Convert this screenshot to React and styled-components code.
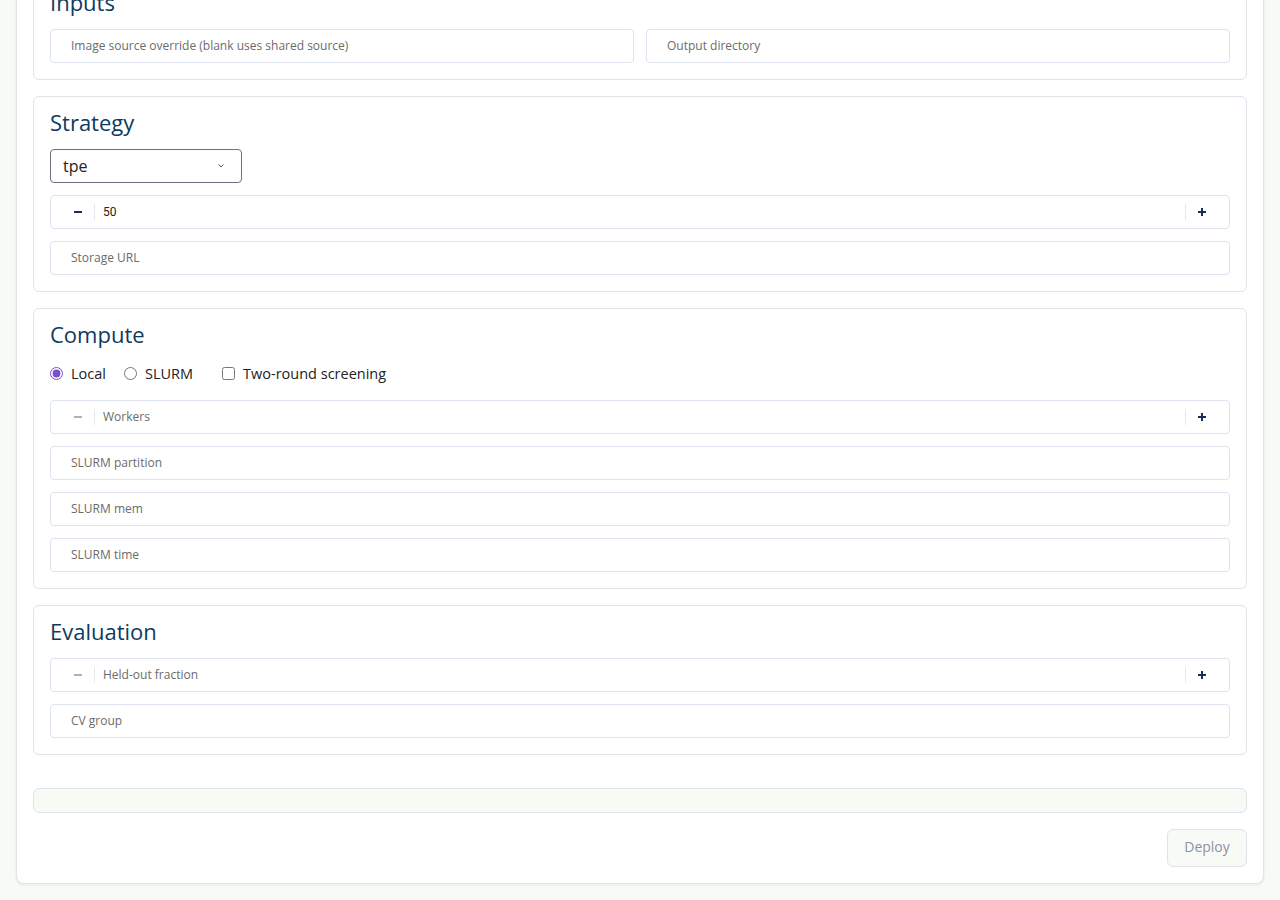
import React from 'react';
import styled, { createGlobalStyle } from 'styled-components';

const GlobalStyle = createGlobalStyle`
  html, body {
    margin: 0;
    background: #f8faf5;
  }
  body {
    font-family: "Open Sans", "Liberation Sans", sans-serif;
    color: #1f2937;
  }
`;

const Page = styled.div`
  padding: 0 16px 17px;
`;

const Panel = styled.div`
  margin-top: -41px;
  background: #fff;
  border: 1px solid #dfe4ea;
  border-radius: 8px;
  box-shadow: 0 1px 3px rgba(15, 23, 42, 0.08);
  padding: 16px;
  display: flex;
  flex-direction: column;
`;

const Sections = styled.div`
  display: flex;
  flex-direction: column;
  gap: 16px;
`;

const Section = styled.section`
  border: 1px solid #dfe4ea;
  border-radius: 6px;
  padding: 12px 16px 16px;
  display: flex;
  flex-direction: column;
  gap: 12px;
`;

const Heading = styled.h2`
  margin: 0 0 2px;
  font-size: 22px;
  line-height: 26px;
  font-weight: 400;
  color: #0d3b5f;
`;

const Row = styled.div`
  display: grid;
  grid-template-columns: 1fr 1fr;
  gap: 12px;
`;

const TextInput = styled.input`
  box-sizing: border-box;
  width: 100%;
  height: 34px;
  border: 1px solid #dde3ee;
  border-radius: 4px;
  padding: 0 20px 1px;
  font: inherit;
  font-size: 12px;
  color: #333;
  background: #fff;
  outline: none;
  &::placeholder {
    color: #6b6b6b;
  }
`;

const SelectBox = styled.div`
  box-sizing: border-box;
  width: 192px;
  height: 34px;
  border: 1px solid #6b7280;
  border-radius: 4px;
  display: flex;
  align-items: center;
  justify-content: space-between;
  padding: 0 16px 0 12px;
  font-size: 16px;
  color: #222;
`;

const NumberWrap = styled.div`
  box-sizing: border-box;
  height: 34px;
  border: 1px solid #dde3ee;
  border-radius: 4px;
  display: flex;
  align-items: center;
`;

const StepButton = styled.button`
  box-sizing: border-box;
  width: 44px;
  height: 16px;
  padding: ${(p) => (p.$side === 'left' ? '0 0 0 10px' : '0 12px 0 0')};
  border: none;
  background: none;
  display: flex;
  align-items: center;
  justify-content: center;
  color: ${(p) => (p.$disabled ? '#a9b0c2' : '#1e2a5a')};
  border-${(p) => (p.$side === 'left' ? 'right' : 'left')}: 1px solid #e5e8ef;
`;

const NumberField = styled.input`
  flex: 1;
  height: 100%;
  border: none;
  outline: none;
  background: transparent;
  padding: 0 8px;
  font-family: Roboto, "Liberation Sans", sans-serif;
  font-size: 12px;
  color: #222;
  &::placeholder {
    font-family: "Open Sans", "Liberation Sans", sans-serif;
    color: #6b6b6b;
  }
`;

const ChoiceRow = styled.div`
  display: flex;
  align-items: center;
  height: 25px;
  margin-bottom: 2px;
  font-size: 14.5px;
  color: #222;
`;

const Choice = styled.label`
  display: flex;
  align-items: center;
  gap: 8px;
  margin-right: ${(p) => p.$gap || 18}px;
  input {
    margin: 0;
    width: 13px;
    height: 13px;
    accent-color: #7b4fd0;
  }
`;

const StatusBar = styled.div`
  margin-top: 33px;
  height: 25px;
  box-sizing: border-box;
  border: 1px solid #dfe4ea;
  border-radius: 6px;
  background: #f8faf5;
`;

const Footer = styled.div`
  display: flex;
  justify-content: flex-end;
  margin-top: 16px;
`;

const DeployButton = styled.button`
  height: 38px;
  width: 80px;
  padding: 0 0 3px;
  border: 1px solid #dfe4ea;
  border-radius: 6px;
  background: #f8faf5;
  color: #8a93a6;
  font: inherit;
  font-size: 14px;
`;

const Minus = () => (
  <svg width="10" height="10" viewBox="0 0 10 10">
    <path d="M1 5h8" stroke="currentColor" strokeWidth="2" />
  </svg>
);

const Plus = () => (
  <svg width="10" height="10" viewBox="0 0 10 10">
    <path d="M1 5h8M5 1v8" stroke="currentColor" strokeWidth="2" />
  </svg>
);

const Chevron = () => (
  <svg width="8" height="6" viewBox="0 0 8 6">
    <path d="M1.5 1.5L4 4l2.5-2.5" fill="none" stroke="#555" strokeWidth="1" />
  </svg>
);

const NumberInput = ({ value, placeholder }) => (
  <NumberWrap>
    <StepButton $side="left" $disabled={!value}><Minus /></StepButton>
    <NumberField defaultValue={value} placeholder={placeholder} />
    <StepButton $side="right"><Plus /></StepButton>
  </NumberWrap>
);

export default function App() {
  return (
    <Page>
      <GlobalStyle />
      <Panel>
        <Sections>
          <Section>
            <Heading>Inputs</Heading>
            <Row>
              <TextInput placeholder="Image source override (blank uses shared source)" />
              <TextInput placeholder="Output directory" />
            </Row>
          </Section>
          <Section>
            <Heading>Strategy</Heading>
            <SelectBox>
              <span>tpe</span>
              <Chevron />
            </SelectBox>
            <NumberInput value="50" />
            <TextInput placeholder="Storage URL" />
          </Section>
          <Section>
            <Heading>Compute</Heading>
            <ChoiceRow>
              <Choice><input type="radio" name="mode" defaultChecked />Local</Choice>
              <Choice $gap={29}><input type="radio" name="mode" />SLURM</Choice>
              <Choice><input type="checkbox" />Two-round screening</Choice>
            </ChoiceRow>
            <NumberInput placeholder="Workers" />
            <TextInput placeholder="SLURM partition" />
            <TextInput placeholder="SLURM mem" />
            <TextInput placeholder="SLURM time" />
          </Section>
          <Section>
            <Heading>Evaluation</Heading>
            <NumberInput placeholder="Held-out fraction" />
            <TextInput placeholder="CV group" />
          </Section>
        </Sections>
        <StatusBar />
        <Footer>
          <DeployButton>Deploy</DeployButton>
        </Footer>
      </Panel>
    </Page>
  );
}
